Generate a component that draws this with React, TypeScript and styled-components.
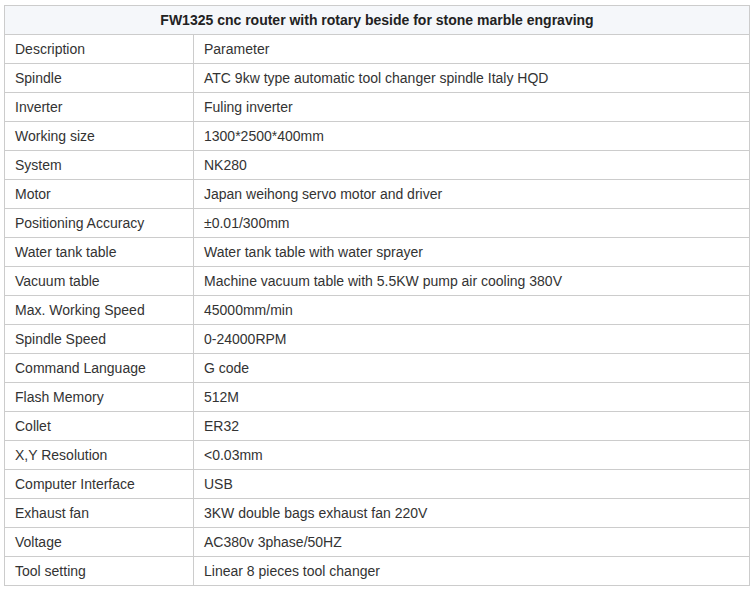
import React from "react";
import styled, { createGlobalStyle } from "styled-components";

const Global = createGlobalStyle`
  html, body { margin: 0; padding: 0; background: #fff; }
  body { font-family: "Liberation Sans", Arial, sans-serif; color: #333; }
`;

const Wrap = styled.div`
  padding: 5px 0 0 4px;
`;

const Table = styled.table`
  width: 746px;
  border-collapse: collapse;
  font-size: 14px;
  color: #333;
  table-layout: fixed;
`;

const HeadCell = styled.th`
  height: 27px;
  padding: 0 10px 1px;
  border: 1px solid #ccc;
  background: #f5f7fa;
  font-weight: bold;
  text-align: center;
  color: #222;
`;

const Cell = styled.td`
  height: 27px;
  padding: 0 10px 1px;
  border: 1px solid #ccc;
  text-align: left;
  vertical-align: middle;
  white-space: nowrap;
`;

const rows: [string, string][] = [
  ["Description", "Parameter"],
  ["Spindle", "ATC 9kw type automatic tool changer spindle Italy HQD"],
  ["Inverter", "Fuling inverter"],
  ["Working size", "1300*2500*400mm"],
  ["System", "NK280"],
  ["Motor", "Japan weihong servo motor and driver"],
  ["Positioning Accuracy", "±0.01/300mm"],
  ["Water tank table", "Water tank table with water sprayer"],
  ["Vacuum table", "Machine vacuum table with 5.5KW pump air cooling 380V"],
  ["Max. Working Speed", "45000mm/min"],
  ["Spindle Speed", "0-24000RPM"],
  ["Command Language", "G code"],
  ["Flash Memory", "512M"],
  ["Collet", "ER32"],
  ["X,Y Resolution", "<0.03mm"],
  ["Computer Interface", "USB"],
  ["Exhaust fan", "3KW double bags exhaust fan 220V"],
  ["Voltage", "AC380v 3phase/50HZ"],
  ["Tool setting", "Linear 8 pieces tool changer"],
];

export default function App() {
  return (
    <>
      <Global />
      <Wrap>
        <Table>
          <colgroup>
            <col style={{ width: 189 }} />
            <col />
          </colgroup>
          <thead>
            <tr>
              <HeadCell colSpan={2}>FW1325 cnc router with rotary beside for stone marble engraving</HeadCell>
            </tr>
          </thead>
          <tbody>
            {rows.map(([a, b]) => (
              <tr key={a}>
                <Cell>{a}</Cell>
                <Cell>{b}</Cell>
              </tr>
            ))}
          </tbody>
        </Table>
      </Wrap>
    </>
  );
}
